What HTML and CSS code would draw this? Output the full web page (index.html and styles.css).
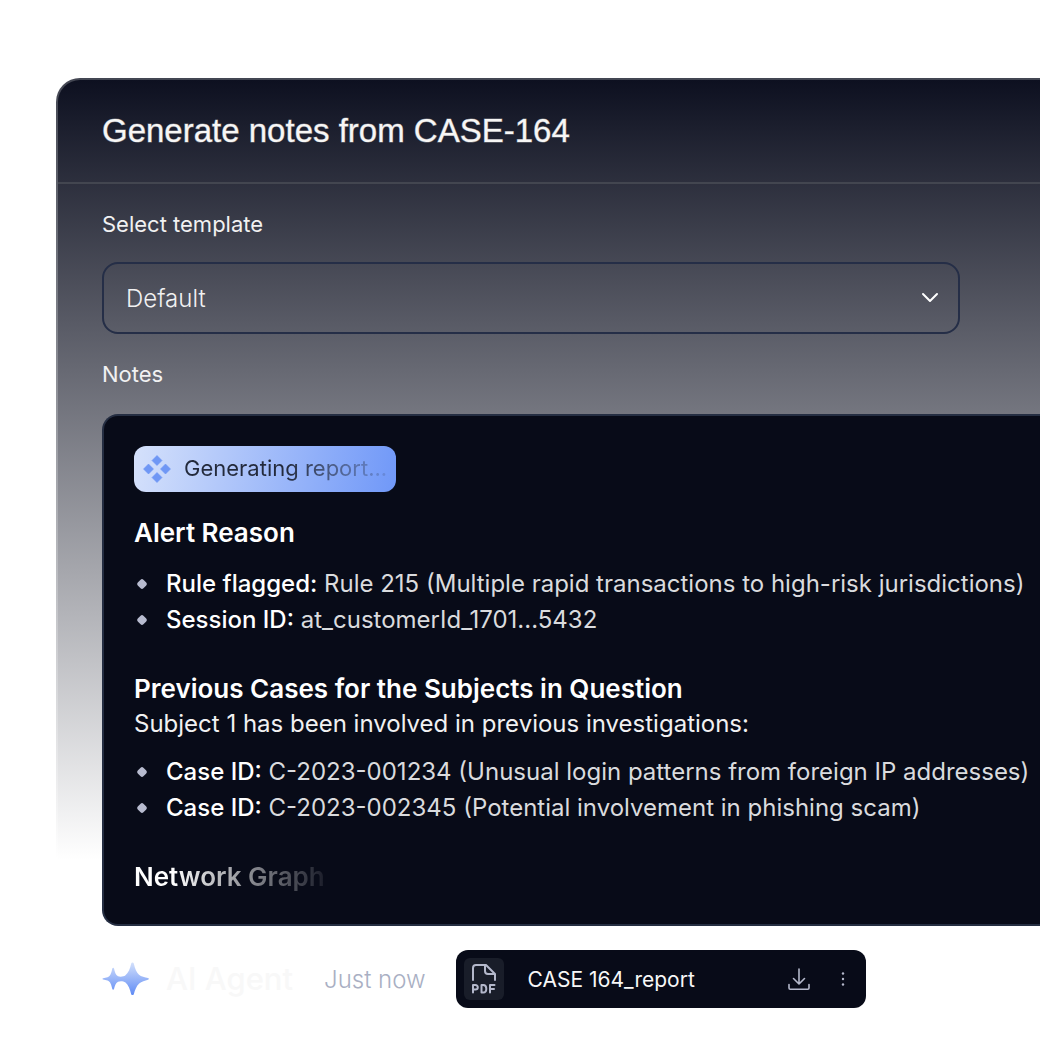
FILE: index.html
```html
<!DOCTYPE html>
<html lang="en">
<head>
<meta charset="utf-8">
<meta name="viewport" content="width=device-width, initial-scale=1">
<title>Generate notes</title>
<link rel="stylesheet" href="styles.css">
</head>
<body>
<main class="panel">
  <header class="panel-header">
    <h1 class="panel-title">Generate notes from CASE-164</h1>
  </header>
  <section class="panel-body">
    <label class="label" for="template">Select template</label>
    <div class="select-wrap">
      <select class="select" id="template"><option>Default</option></select>
      <svg class="chevron" width="18" height="12" viewBox="0 0 18 12" fill="none" stroke="#fff" stroke-width="2" stroke-linecap="round" stroke-linejoin="round"><path d="M2 2l7 7 7-7"/></svg>
    </div>
    <h2 class="label">Notes</h2>
    <article class="notes">
      <div class="status">
        <svg width="28" height="28" viewBox="0 0 28 28" fill="#6f97f5"><path d="M14 .5l5 5-5 5-5-5zM14 17.500l5 5-5 5-5-5zM5.500 9l5 5-5 5-5-5zM22.500 9l5 5-5 5-5-5z" stroke="#6f97f5" stroke-linejoin="round" stroke-width=".6"/></svg>
        <span class="status-text">Generating report...</span>
      </div>
      <h3 class="heading">Alert Reason</h3>
      <ul class="list">
        <li class="item"><b class="key">Rule flagged:</b> Rule 215 (Multiple rapid transactions to high-risk jurisdictions)</li>
        <li class="item"><b class="key">Session ID:</b> at_customerId_1701...5432</li>
      </ul>
      <h3 class="heading">Previous Cases for the Subjects in Question</h3>
      <p class="lead">Subject 1 has been involved in previous investigations:</p>
      <ul class="list">
        <li class="item"><b class="key">Case ID:</b> C-2023-001234 (Unusual login patterns from foreign IP addresses)</li>
        <li class="item"><b class="key">Case ID:</b> C-2023-002345 (Potential involvement in phishing scam)</li>
      </ul>
      <h3 class="heading heading-fading">Network Graph</h3>
    </article>
  </section>
</main>
<footer class="agent">
  <svg class="spark" width="48" height="34" viewBox="0 0 48 34"><defs><linearGradient id="g" x1="0" y1="0" x2="0" y2="1"><stop offset="0" stop-color="#d3e0fb"/><stop offset="1" stop-color="#5f8bf5"/></linearGradient></defs><path fill="url(#g)" d="M10.300 6.500C10.600 5.500 11.700 5.500 12 6.500C12.900 10 13.500 13 16 14.200C18 15 21.500 14.800 23.500 13.200C26.500 11 28 7 29.200 1.600C29.600.2 31.400.2 31.800 1.600C33 7 34.500 10.500 37 12.800C39 14.600 43 15.200 46 16.100C47.300 16.600 47.300 17.300 46 17.800C43 18.700 39.500 19.500 37.200 21.600C34.500 24 33 28 31.800 32.200C31.400 33.400 29.600 33.400 29.200 32.200C28 27.500 26.500 23 23.500 20.500C21.500 19 18 18.800 16 19.700C13.500 21 12.900 24 12 27C11.700 28 10.600 28 10.300 27C9.400 23 8.500 19.500 5.500 18.500L1.200 17.600C.2 17.300.2 16.500 1.200 16.200L5.500 15.300C8.500 14.300 9.400 10.500 10.300 6.500Z"/></svg>
  <strong class="agent-name">AI Agent</strong>
  <span class="agent-time">Just now</span>
  <div class="file">
    <span class="file-icon">
      <svg width="26" height="32" viewBox="0 0 26 32" fill="none" stroke="#b4b8cb" stroke-width="2" stroke-linecap="round" stroke-linejoin="round"><path d="M2 17V5a3 3 0 0 1 3-3h10l9 9v6M14 2v6a3 3 0 0 0 3 3h7"/><path d="M2 29.500V22h2.500a2.300 2.300 0 0 1 0 4.600H2M10.500 22h1.800c2 0 3 1.500 3 3.700s-1 3.800-3 3.800h-1.800zM19 29.500V22h4.500M19 26h4"/></svg>
    </span>
    <span class="file-name">CASE 164_report</span>
    <button class="icon-button" type="button" aria-label="Download"><svg width="22" height="22" viewBox="0 0 22 22" fill="none" stroke="#b4b8cb" stroke-width="1.600" stroke-linecap="round" stroke-linejoin="round"><path d="M11 1v14.500M5.500 10.500l5.500 5.500 5.500-5.500M1 16.500V20a1.200 1.200 0 0 0 1.200 1.200h17.600A1.200 1.200 0 0 0 21 20v-3.500"/></svg></button>
    <button class="icon-button" type="button" aria-label="More options"><svg width="22" height="22" viewBox="0 0 22 22" fill="#b4b8cb"><circle cx="11" cy="5.500" r="1.200"/><circle cx="11" cy="11" r="1.200"/><circle cx="11" cy="16.500" r="1.200"/></svg></button>
  </div>
</footer>
</body>
</html>
```
FILE: styles.css
```css
* { box-sizing: border-box; }

body {
  margin: 0;
  padding-top: 78px;
  background: #fff;
  color: #fff;
  font-family: Inter, "Liberation Sans", sans-serif;
  overflow-x: hidden;
}

h1, h2, h3, p, ul { margin: 0; padding: 0; }

.panel {
  margin-left: 56px;
  border: 2px solid transparent;
  border-right: 0;
  border-bottom: 0;
  border-radius: 24px 0 0 0;
  background:
    linear-gradient(#0d1020, #fff 780px) padding-box,
    linear-gradient(#434652, #fff 780px) border-box;
}

.panel-header {
  padding: 30px 44px;
  border-bottom: 2px solid #434650;
}

.panel-title {
  font: 400 33px/42px "Liberation Sans", Arial, sans-serif;
  color: #f7f6f5;
  -webkit-text-stroke: 1px rgba(247, 246, 245, 0.4);
  white-space: nowrap;
}

.panel-body { padding: 24px 0 0 44px; }

.label {
  display: block;
  font-size: 22px;
  font-weight: 400;
  line-height: 32px;
  color: #f1f1f2;
}

.select-wrap {
  display: grid;
  align-items: center;
  margin: 22px 80px 24px 0;
}

.select {
  grid-area: 1 / 1;
  height: 72px;
  padding: 2px 22px 0;
  border: 2px solid #252e47;
  border-radius: 16px;
  background: transparent;
  color: #f1f1f2;
  font: 300 24px/36px Inter, sans-serif;
  appearance: none;
}

.chevron {
  grid-area: 1 / 1;
  justify-self: end;
  margin-right: 21px;
  pointer-events: none;
}

.notes {
  margin-top: 24px;
  padding: 30px 0 29px 30px;
  border: 2px solid #252e42;
  border-right: 0;
  border-radius: 16px 0 0 16px;
  background: #080b18;
  white-space: nowrap;
}

.status {
  display: inline-flex;
  align-items: center;
  gap: 13px;
  height: 46px;
  padding: 0 9px;
  border-radius: 12px;
  background: linear-gradient(100deg, #d5e1fb, #7098f8);
  vertical-align: top;
}

.status-text {
  padding-bottom: 2px;
  font-size: 22px;
  line-height: 32px;
  color: transparent;
  background: linear-gradient(90deg, #232a3c 50%, rgba(35, 42, 60, 0.15));
  background-clip: text;
}

.heading {
  font-size: 26px;
  font-weight: 600;
  line-height: 36px;
}

.status + .heading { margin-top: 23px; }

.list {
  margin: 15px 0 33px;
  list-style: none;
}

.lead + .list { margin-top: 13px; }

.item {
  display: flex;
  align-items: center;
  font-size: 24px;
  line-height: 36px;
  color: #dadbde;
  white-space: pre;
}

.item::before {
  content: "";
  width: 8px;
  height: 8px;
  margin: 0 20px 0 4px;
  border-radius: 2px;
  background: #b7bbcf;
  transform: rotate(45deg);
}

.key {
  font-weight: 500;
  color: #fff;
}

.lead {
  font-size: 24px;
  line-height: 34px;
  color: #f1f1f2;
}

.heading-fading {
  width: max-content;
  color: transparent;
  background: linear-gradient(90deg, #fff 20%, rgba(255, 255, 255, 0.08));
  background-clip: text;
}

.agent {
  display: flex;
  align-items: center;
  padding: 24px 0 32px 102px;
  white-space: nowrap;
}

.agent-name {
  margin: 0 31px 0 16px;
  font: 500 31px/40px Inter, sans-serif;
  color: #f8f8f8;
}

.agent-time {
  margin-right: 30px;
  padding-top: 2px;
  font-size: 24px;
  font-weight: 300;
  line-height: 36px;
  color: #a9afc3;
}

.file {
  display: flex;
  align-items: center;
  width: 410px;
  height: 58px;
  padding: 0 12px 0 8px;
  border-radius: 12px;
  background: #080b18;
}

.file-icon {
  display: grid;
  place-items: center;
  width: 40px;
  height: 42px;
  margin-right: 24px;
  border-radius: 6px;
  background: #191d29;
}

.file-name {
  flex: 1;
  padding-top: 2px;
  font-size: 21px;
  line-height: 32px;
  color: #f7f7f7;
}

.icon-button {
  display: flex;
  margin-left: 22px;
  padding: 0;
  border: 0;
  background: none;
}
```
